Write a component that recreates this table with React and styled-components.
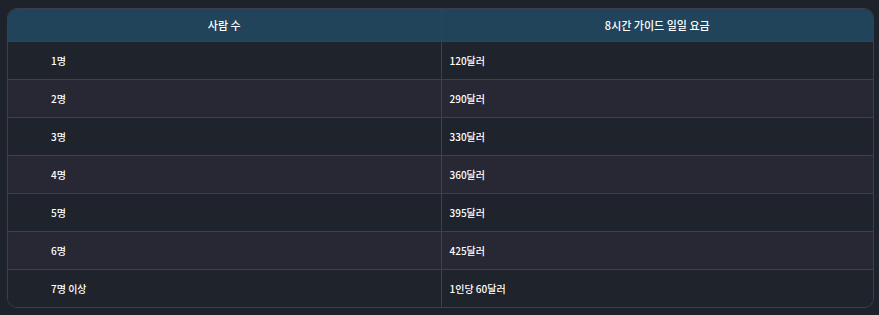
import React from "react";
import styled, { createGlobalStyle } from "styled-components";

const GlobalStyle = createGlobalStyle`
  body {
    margin: 0;
    background: #1e222a;
    font-family: "Noto Sans CJK KR", "Noto Sans", sans-serif;
  }
`;

const Page = styled.div`
  padding: 8px 4px 7px 7px;
`;

const Wrapper = styled.div`
  width: 867px;
  border: 1px solid #3b3e4c;
  border-radius: 10px;
  overflow: hidden;
  box-sizing: border-box;
`;

const Table = styled.table`
  width: 100%;
  border-collapse: separate;
  border-spacing: 0;
  table-layout: fixed;
`;

const HeadCell = styled.th`
  height: 32px;
  padding: 0;
  background: #22445a;
  color: #ffffff;
  font-size: 11px;
  font-weight: 500;
  text-align: center;
  border-bottom: 1px solid #0f5168;
  & + & {
    border-left: 1px solid #3b3e4c;
  }
`;

const Row = styled.tr`
  background: ${(p) => (p.$even ? "#272834" : "#1f232c")};
  &:not(:last-child) > td {
    border-bottom: 1px solid #3e4050;
  }
`;

const Cell = styled.td`
  height: 37px;
  padding: 0 0 0 ${(p) => p.$indent}px;
  color: #ffffff;
  font-size: 10px;
  font-weight: 500;
  & + & {
    border-left: 1px solid #3e4050;
  }
`;

const rates = [
  { people: "1명", price: "120달러" },
  { people: "2명", price: "290달러" },
  { people: "3명", price: "330달러" },
  { people: "4명", price: "360달러" },
  { people: "5명", price: "395달러" },
  { people: "6명", price: "425달러" },
  { people: "7명 이상", price: "1인당 60달러" },
];

export default function App() {
  return (
    <Page>
      <GlobalStyle />
      <Wrapper>
        <Table>
          <thead>
            <tr>
              <HeadCell>사람 수</HeadCell>
              <HeadCell>8시간 가이드 일일 요금</HeadCell>
            </tr>
          </thead>
          <tbody>
            {rates.map((r, i) => (
              <Row key={i} $even={i % 2 === 1}>
                <Cell $indent={43}>{r.people}</Cell>
                <Cell $indent={8}>{r.price}</Cell>
              </Row>
            ))}
          </tbody>
        </Table>
      </Wrapper>
    </Page>
  );
}
